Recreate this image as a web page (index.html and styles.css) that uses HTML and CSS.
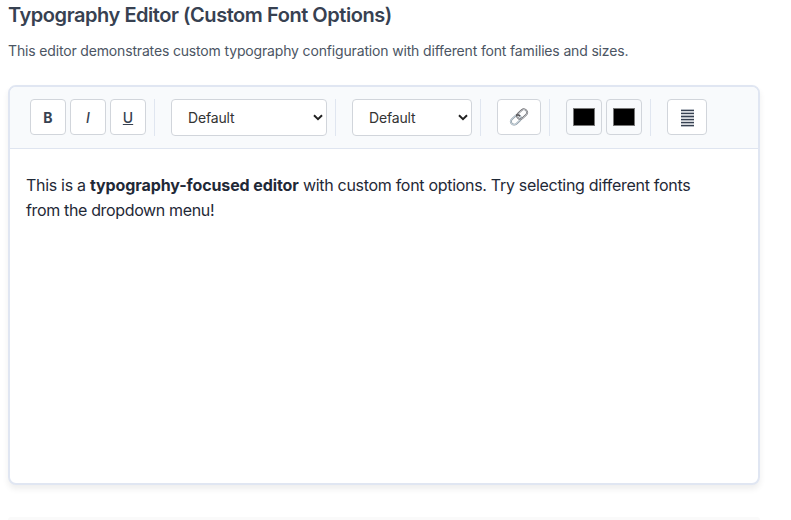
FILE: index.html
```html
<!DOCTYPE html>
<html lang="en">
<head>
<meta charset="utf-8">
<title>Typography Editor</title>
<link rel="stylesheet" href="styles.css">
</head>
<body>
<section class="demo">
  <h3 class="title">Typography Editor (Custom Font Options)</h3>
  <p class="description">This editor demonstrates custom typography configuration with different font families and sizes.</p>
  <div class="editor">
    <div class="toolbar">
      <div class="group">
        <button class="btn bold">B</button>
        <button class="btn italic">I</button>
        <button class="btn underline">U</button>
      </div>
      <div class="group">
        <div class="select family"><span>Default</span><svg class="chevron" viewBox="0 0 10 7"><path d="M1 1.2 5 5.1 9 1.2"/></svg></div>
      </div>
      <div class="group">
        <div class="select size"><span>Default</span><svg class="chevron" viewBox="0 0 10 7"><path d="M1 1.2 5 5.1 9 1.2"/></svg></div>
      </div>
      <div class="group">
        <button class="btn link" aria-label="Link">
          <svg width="20" height="20" viewBox="0 0 20 20" fill="none">
            <g transform="rotate(-43 10 10)">
              <rect x=".2" y="6.8" width="11.2" height="6.4" rx="3.2" stroke="#87939c" stroke-width="1.8"/>
              <rect x=".2" y="6.6" width="11.2" height="6.4" rx="3.2" stroke="#c6d3dc" stroke-width="1"/>
              <rect x="8.6" y="6.8" width="11.2" height="6.4" rx="3.2" stroke="#6e6d70" stroke-width="1.8"/>
              <rect x="8.6" y="7" width="11.2" height="6.4" rx="3.2" stroke="#bfc3c8" stroke-width=".9"/>
              <path d="M11.4 10q0-2.6-2.4-3.2" stroke="#504b4d" stroke-width="1.4"/>
            </g>
          </svg>
        </button>
      </div>
      <div class="group">
        <div class="color"><i class="swatch"></i></div>
        <div class="color"><i class="swatch"></i></div>
      </div>
      <div class="group last">
        <button class="btn align" aria-label="Align">
          <svg width="13" height="18" viewBox="0 0 13 18" shape-rendering="crispEdges">
            <path fill="#b5bac2" d="M0 0h13v18H0z"/>
            <path fill="#374151" d="M0 1h13v1H0zM0 4h13v1H0zM0 7h13v1H0zM0 10h13v1H0zM0 13h13v1H0zM0 16h13v1H0z"/>
            <path fill="#d6d9dd" d="M0 2h13v1H0zM0 5h13v1H0zM0 9h13v1H0zM0 12h13v1H0zM0 15h13v1H0z"/>
          </svg>
        </button>
      </div>
    </div>
    <div class="content"><p>This is a <strong>typography-focused editor</strong> <span class="rest">with custom font options. Try selecting different fonts</span><br><span class="second">from the dropdown menu!</span></p></div>
  </div>
</section>
<section class="next"></section>
</body>
</html>
```
FILE: styles.css
```css
* { box-sizing: border-box; }
body {
  margin: 0;
  height: 520px;
  overflow: hidden;
  background: #fff;
  font-family: Inter, "Liberation Sans", sans-serif;
}
.demo { width: 752px; margin-left: 8px; padding-top: 3px; }
.title {
  margin: 0;
  font-size: 20px;
  line-height: 24px;
  font-weight: 600;
  letter-spacing: -0.45px;
  color: #374151;
}
.description {
  margin: 13px 0 0;
  font-size: 14px;
  line-height: 22px;
  letter-spacing: -0.16px;
  color: #4b5563;
  white-space: nowrap;
}
.editor {
  height: 400px;
  margin-top: 23px;
  border: 2px solid #e0e6f2;
  border-radius: 8px;
  background: #fff;
  box-shadow: 0 4px 6px rgba(0, 0, 0, .07);
  overflow: hidden;
}
.toolbar {
  display: flex;
  gap: 16px;
  height: 62px;
  padding: 12px 20px;
  background: #f8fafc;
  border-bottom: 1px solid #dfe5f0;
}
.group {
  display: flex;
  gap: 4px;
  height: 37px;
  padding-right: 8px;
  border-right: 1px solid #e0e6f0;
}
.last { border-right: 0; }
.btn, .color {
  display: flex;
  align-items: center;
  justify-content: center;
  width: 36px;
  height: 36px;
  padding: 0;
  border: 1px solid #d1d5db;
  border-radius: 4px;
  background: #fff;
  font: 500 14px Inter, sans-serif;
  color: #374151;
}
.bold { font-weight: 700; }
.italic { font-style: italic; }
.underline { text-decoration: underline; text-underline-offset: 1px; }
.link { width: 44px; }
.align { width: 40px; padding-top: 2px; }
.color { background: #f8fafc; }
.swatch { width: 22px; height: 18px; background: #000; border: 1px solid #777; }
.select {
  display: flex;
  align-items: center;
  justify-content: space-between;
  height: 37px;
  padding: 0 3px 0 16px;
  border: 1px solid #d1d5db;
  border-radius: 4px;
  background: #fff;
  font-size: 14px;
  letter-spacing: -0.15px;
  color: #333;
}
.family { width: 156px; }
.size { width: 120px; }
.chevron { width: 10px; height: 7px; fill: none; stroke: #222; stroke-width: 2; }
.content {
  padding: 24px 16px;
  font-size: 16px;
  line-height: 25px;
  color: #1f2937;
  white-space: nowrap;
}
.content p { margin: 0; letter-spacing: -0.3px; }
.content strong { font-weight: 700; letter-spacing: -0.1px; }
.content .second { letter-spacing: -0.35px; }
.next {
  width: 752px;
  height: 3px;
  margin: 32px 0 0 8px;
  border-radius: 8px 8px 0 0;
  background: #fafafa;
}
```
